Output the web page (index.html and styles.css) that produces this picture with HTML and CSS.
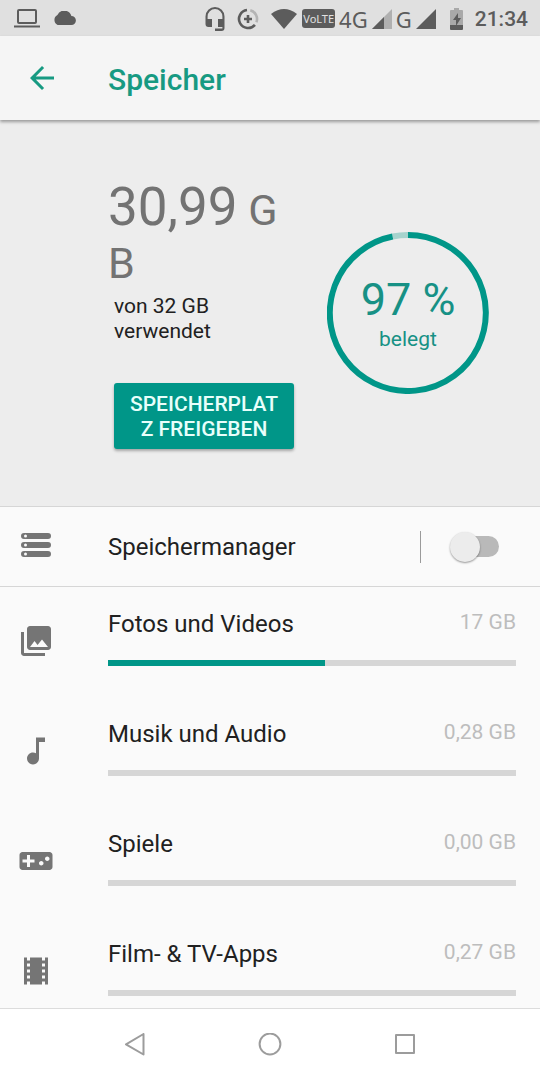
FILE: index.html
```
<!DOCTYPE html>
<html lang="de">
<head>
<meta charset="utf-8">
<meta name="viewport" content="width=device-width, initial-scale=1">
<title>Speicher</title>
<link rel="stylesheet" href="styles.css">
</head>
<body>
<div class="statusbar">
  <div class="status-group status-notes">
    <svg width="26" height="20" viewBox="0 0 26 20" aria-hidden="true"><rect x="4" y="1" width="18" height="13" rx="1" fill="none" stroke="currentColor" stroke-width="2"/><path d="M0 16.500h26v2H0z" fill="currentColor"/></svg>
    <svg width="24" height="16" viewBox="0 0 24 16" aria-hidden="true"><path d="M19.400 5A7.500 7.500 0 0 0 5.400 4 5.600 5.600 0 0 0 5.600 14h13.800a4.500 4.500 0 0 0 0-9z" fill="currentColor"/></svg>
  </div>
  <div class="status-group status-system">
    <svg width="20" height="24" viewBox="0 0 20 24" aria-hidden="true"><path d="M10 0a9.500 9.500 0 0 0-9.500 9.500V17a3 3 0 0 0 3 3H7v-8H2.600V9.500a7.400 7.400 0 0 1 14.800 0V12H13v8h4.400v1.500H10V24h6.500a3 3 0 0 0 3-3V9.500A9.500 9.500 0 0 0 10 0z" fill="currentColor"/></svg>
    <svg width="22" height="22" viewBox="0 0 22 22" aria-hidden="true"><g fill="none" stroke-width="2.600"><path d="M13.300 2.300A9 9 0 0 1 19.400 14.200" stroke="#b4b4b4"/><path d="M10 2.050A9 9 0 1 0 17.900 16.800" stroke="currentColor"/><path d="M11 7v8M7 11h8" stroke="currentColor"/></g></svg>
    <svg width="26" height="20" viewBox="0 0 26 20" aria-hidden="true"><path d="M0 5Q13-5 26 5L13 20z" fill="currentColor"/></svg>
  </div>
  <div class="status-group status-network">
    <span class="volte">VoLTE</span>
    <span class="net">4G</span>
    <svg width="20" height="20" viewBox="0 0 20 20" aria-hidden="true"><path d="M20 0v20H0z" fill="#b0b0b0"/><path d="M12 8v12H0z" fill="currentColor"/></svg>
    <span class="net">G</span>
    <svg width="20" height="20" viewBox="0 0 20 20" aria-hidden="true"><path d="M20 0v20H0z" fill="currentColor"/></svg>
  </div>
  <div class="status-group status-power">
    <svg width="13" height="22" viewBox="0 0 13 22" aria-hidden="true"><path d="M4 0h5v2h3q1 0 1 1v15H0V3q0-1 1-1h3z" fill="#a9a9a9"/><path d="M0 17h13v4q0 1-1 1H1q-1 0-1-1z" fill="currentColor"/><path d="M8 5l-5 7h3v6l5-8H8z" fill="currentColor"/></svg>
    <time>21:34</time>
  </div>
</div>

<header class="appbar">
  <button class="back" type="button" aria-label="Zurück">
    <svg width="36" height="36" viewBox="0 0 24 24" aria-hidden="true"><path d="M20 11H7.830l5.590-5.590L12 4l-8 8 8 8 1.410-1.410L7.830 13H20z" fill="currentColor"/></svg>
  </button>
  <h1>Speicher</h1>
</header>

<main class="content">
  <section class="summary">
    <div class="usage">
      <p class="amount">30,99<span class="unit">&nbsp;GB</span></p>
      <p class="caption">von 32 GB verwendet</p>
      <button class="free-up" type="button">SPEICHERPLATZ FREIGEBEN</button>
    </div>
    <div class="donut">
      <svg class="ring" viewBox="0 0 162 162" aria-hidden="true">
        <g fill="none" stroke-width="6">
          <path d="M65.600 4.500A78 78 0 0 1 81 3" stroke="#a6d3cd"/>
          <path d="M81 3A78 78 0 1 1 65.600 4.500" stroke="#009688"/>
        </g>
      </svg>
      <div class="donut-text">
        <strong class="percent">97&nbsp;%</strong>
        <span>belegt</span>
      </div>
    </div>
  </section>

  <div class="manager">
    <svg class="icon" viewBox="0 0 36 36" aria-hidden="true"><path d="M6 4h24a3 3 0 0 1 0 6H6a3 3 0 0 1 0-6zM6 13h24a3 3 0 0 1 0 6H6a3 3 0 0 1 0-6zM6 22h24a3 3 0 0 1 0 6H6a3 3 0 0 1 0-6z" fill="currentColor"/><g fill="#fafafa"><circle cx="7.500" cy="7" r="1.500"/><circle cx="7.500" cy="16" r="1.500"/><circle cx="7.500" cy="25" r="1.500"/></g></svg>
    <label class="name" for="manager-switch">Speichermanager</label>
    <div class="toggle"><input class="switch" id="manager-switch" type="checkbox" role="switch"></div>
  </div>

  <ul class="categories">
    <li class="category">
      <svg class="icon" viewBox="0 0 24 24" aria-hidden="true"><path d="M22 16V4c0-1.100-.9-2-2-2H8c-1.100 0-2 .9-2 2v12c0 1.100.9 2 2 2h12c1.100 0 2-.9 2-2zm-11-4l2.030 2.710L16 11l4 5H8l3-4zM2 6v14c0 1.100.9 2 2 2h14v-2H4V6H2z" fill="currentColor"/></svg>
      <label class="name" for="photos">Fotos und Videos</label>
      <span class="size">17 GB</span>
      <progress id="photos" value="17" max="32"></progress>
    </li>
    <li class="category">
      <svg class="icon" viewBox="0 0 24 24" aria-hidden="true"><path d="M12 3v10.550c-.59-.34-1.270-.55-2-.55-2.210 0-4 1.790-4 4s1.790 4 4 4 4-1.790 4-4V6h4V3z" fill="currentColor"/></svg>
      <label class="name" for="music">Musik und Audio</label>
      <span class="size">0,28 GB</span>
      <progress id="music" value="0" max="32"></progress>
    </li>
    <li class="category">
      <svg class="icon" viewBox="0 0 24 24" aria-hidden="true"><path d="M21 6H3c-1.100 0-2 .9-2 2v8c0 1.100.9 2 2 2h18c1.100 0 2-.9 2-2V8c0-1.100-.9-2-2-2zm-10 7H8v3H6v-3H3v-2h3V8h2v3h3v2zm4.500 2c-.83 0-1.500-.67-1.500-1.500s.67-1.500 1.500-1.500 1.500.67 1.500 1.500-.67 1.500-1.500 1.500zm4-3c-.83 0-1.500-.67-1.500-1.500S18.670 9 19.500 9s1.500.67 1.500 1.500-.67 1.500-1.500 1.500z" fill="currentColor"/></svg>
      <label class="name" for="games">Spiele</label>
      <span class="size">0,00 GB</span>
      <progress id="games" value="0" max="32"></progress>
    </li>
    <li class="category">
      <svg class="icon" viewBox="0 0 24 24" aria-hidden="true"><path d="M18 3v2h-2V3H8v2H6V3H4v18h2v-2h2v2h8v-2h2v2h2V3h-2zM8 17H6v-2h2v2zm0-4H6v-2h2v2zm0-4H6V7h2v2zm10 8h-2v-2h2v2zm0-4h-2v-2h2v2zm0-4h-2V7h2v2z" fill="currentColor"/></svg>
      <label class="name" for="movies">Film- &amp; TV-Apps</label>
      <span class="size">0,27 GB</span>
      <progress id="movies" value="0" max="32"></progress>
    </li>
  </ul>
</main>

<nav class="navbar" aria-label="System">
  <button type="button" aria-label="Zurück"><svg width="24" height="24" viewBox="0 0 24 24" aria-hidden="true"><path d="M20.500 1v20.500L3 11.300z"/></svg></button>
  <button type="button" aria-label="Startseite"><svg width="24" height="24" viewBox="0 0 24 24" aria-hidden="true"><circle cx="12" cy="11" r="10.400"/></svg></button>
  <button type="button" aria-label="Übersicht"><svg width="24" height="24" viewBox="0 0 24 24" aria-hidden="true"><rect x="3" y="2" width="18" height="18"/></svg></button>
</nav>
</body>
</html>
```
FILE: styles.css
```
* {
  box-sizing: border-box;
}

body {
  display: flex;
  flex-direction: column;
  height: 100vh;
  margin: 0;
  background: #fafafa;
  color: #212121;
  font-family: Roboto, "Liberation Sans", sans-serif;
  font-size: 24px;
  line-height: 28px;
}

button {
  padding: 0;
  border: 0;
  background: none;
  font: inherit;
}

svg {
  display: block;
  flex: none;
}

h1,
p {
  margin: 0;
}

/* Status bar */

.statusbar {
  display: flex;
  align-items: center;
  gap: 13px;
  height: 36px;
  padding: 1px 12px 0 14px;
  background: #e0e0e0;
  color: #5c5c5c;
}

.status-group {
  display: flex;
  align-items: center;
  gap: 12px;
}

.status-notes {
  flex: 1;
}

.status-network {
  gap: 4px;
  margin-left: -8px;
}

.volte {
  padding: 0 1px;
  border-radius: 3px;
  background: #5c5c5c;
  color: #e0e0e0;
  font-family: "Noto Sans", sans-serif;
  font-size: 11px;
  line-height: 19px;
}

.net {
  font-family: "Noto Sans", sans-serif;
  font-size: 22px;
}

.status-power {
  padding-left: 1px;
}

.status-power time {
  font-size: 21px;
  font-weight: 500;
}

/* App bar */

.appbar {
  z-index: 1;
  display: grid;
  grid-template-columns: 84px 1fr;
  align-items: center;
  height: 84px;
  padding: 0 24px;
  background: #f5f5f5;
  box-shadow: 0 2px 3px rgba(0, 0, 0, 0.35);
  color: #179a82;
}

.appbar h1 {
  padding-top: 3px;
  font-size: 30px;
  font-weight: 500;
  line-height: 36px;
}

.back {
  justify-self: start;
  color: inherit;
}

/* Summary */

.content {
  flex: 1;
  min-height: 0;
  overflow-y: auto;
  scrollbar-width: none;
}

.summary {
  display: grid;
  grid-template-columns: 186px 1fr;
  column-gap: 6px;
  padding: 61px 24px 57px 108px;
  border-bottom: 1px solid #d6d6d6;
  background: #ededed;
}

.usage {
  display: grid;
}

.amount {
  color: #737373;
  font-size: 53px;
  line-height: 53px;
  overflow-wrap: anywhere;
}

.unit {
  font-size: 43px;
  line-height: 43px;
}

.caption {
  margin: 7px 0 39px 6px;
  font-size: 21px;
  line-height: 25px;
}

.free-up {
  margin-left: 6px;
  padding: 9px 12px 7px;
  border-radius: 3px;
  background: #009688;
  box-shadow: 0 2px 3px rgba(0, 0, 0, 0.3);
  color: #e8fffb;
  font-size: 21px;
  font-weight: 500;
  line-height: 25px;
  overflow-wrap: anywhere;
}

.donut {
  display: grid;
  place-content: center;
  place-items: center;
  padding-bottom: 5px;
  color: #179185;
}

.ring,
.donut-text {
  grid-area: 1 / 1;
}

.ring {
  width: 162px;
}

.donut-text {
  display: grid;
  justify-items: center;
  padding-top: 2px;
  font-size: 21px;
}

.percent {
  font-size: 45px;
  font-weight: 400;
  line-height: 50px;
}

/* Storage manager */

.manager,
.category {
  display: grid;
  align-items: center;
  padding: 0 24px 0 18px;
}

.manager {
  grid-template-columns: 90px 1fr auto;
  height: 80px;
  padding-right: 41px;
  border-bottom: 1px solid #d6d6d6;
}

.icon {
  width: 36px;
  height: 36px;
  color: #757575;
}

.toggle {
  display: flex;
  align-items: center;
  height: 32px;
  padding-left: 29px;
  border-left: 1px solid #9a9a9a;
}

.switch {
  display: flex;
  align-items: center;
  width: 49px;
  height: 21px;
  margin: 0;
  border-radius: 11px;
  background: linear-gradient(#b9b9b9, #b9b9b9) right / 42px 21px no-repeat;
  appearance: none;
}

.switch::before {
  width: 30px;
  height: 30px;
  border-radius: 50%;
  background: #ececec;
  box-shadow: 0 1px 2px rgba(0, 0, 0, 0.4);
  content: "";
}

.switch:checked {
  justify-content: flex-end;
}

.switch:checked::before {
  background: #009688;
}

/* Categories */

.categories {
  margin: 0;
  padding: 0;
  list-style: none;
}

.category {
  grid-template-columns: 90px 1fr auto;
  row-gap: 22px;
  padding-top: 23px;
  padding-bottom: 31px;
}

.category .icon {
  grid-row: 1 / 3;
  margin-top: 5px;
}

.size {
  color: #bdbdbd;
  font-size: 21px;
  line-height: 24px;
  align-self: start;
}

progress {
  grid-column: 2 / 4;
  width: 100%;
  height: 6px;
  border: 0;
  background: #d6d6d6;
  appearance: none;
}

progress::-webkit-progress-bar {
  background: #d6d6d6;
}

progress::-webkit-progress-value {
  background: #009688;
}

/* Navigation bar */

.navbar {
  display: grid;
  grid-template-columns: repeat(3, 1fr);
  flex: none;
  height: 72px;
  padding: 0 12.5%;
  border-top: 1px solid #dcdcdc;
  background: #ffffff;
}

.navbar button {
  display: grid;
  place-items: center;
}

.navbar svg {
  fill: none;
  stroke: #9c9c9c;
  stroke-width: 2;
  stroke-linejoin: round;
}
```
